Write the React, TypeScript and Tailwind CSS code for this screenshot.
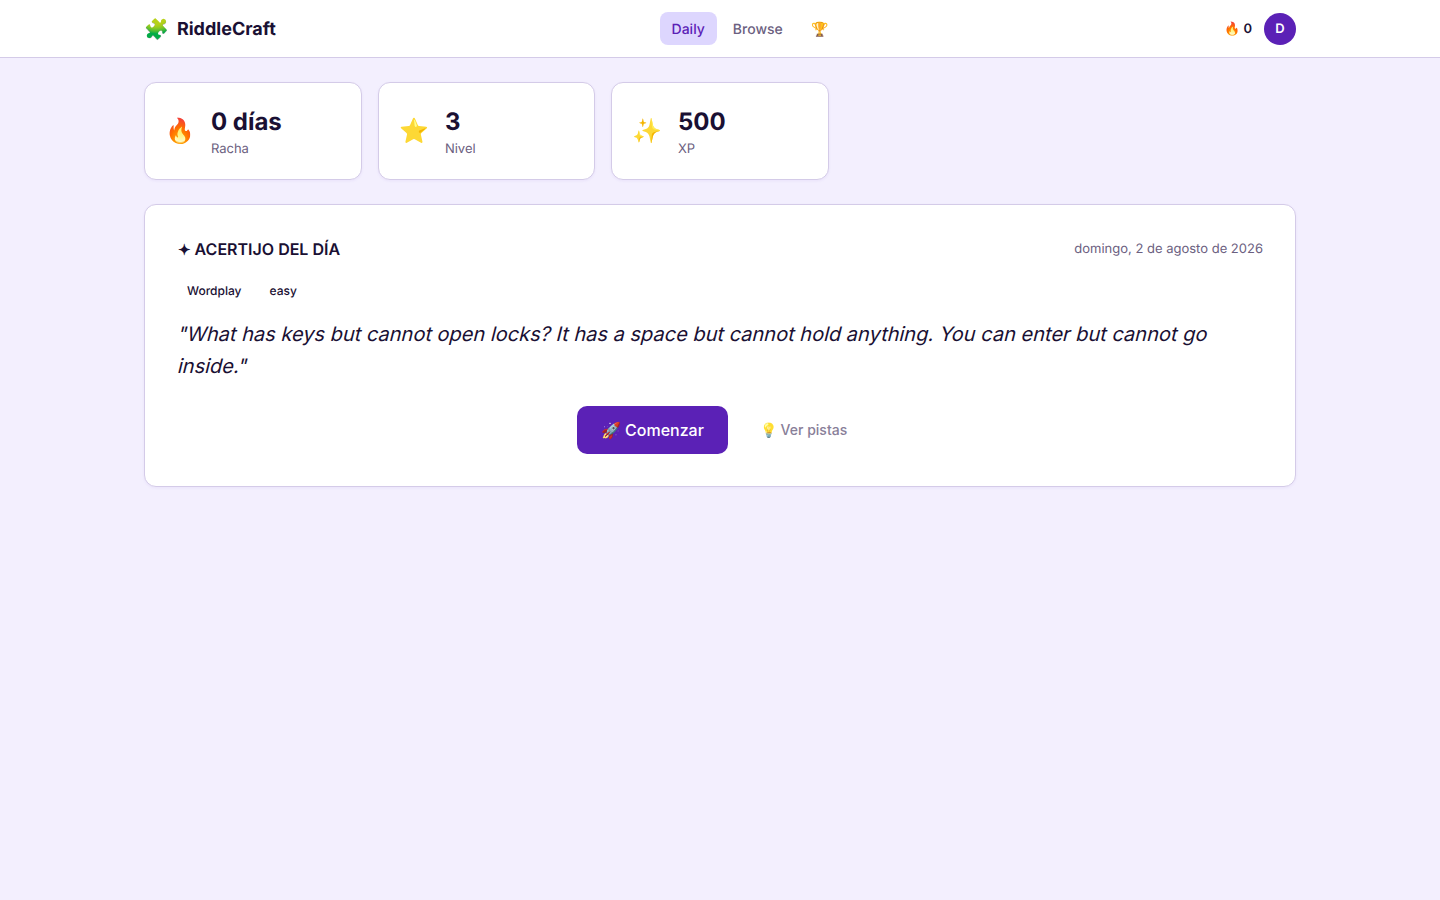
const stats = [
  { icon: "🔥", value: "0 días", label: "Racha" },
  { icon: "⭐", value: "3", label: "Nivel" },
  { icon: "✨", value: "500", label: "XP" },
];

export default function App() {
  return (
    <div className="min-h-screen bg-[#f3effe] font-['Inter',sans-serif] text-[#1a1033] antialiased [text-rendering:geometricPrecision]">
      <header className="h-[58px] bg-white border-b border-[#d4cbe8]">
        <div className="max-w-[1152px] mx-auto h-full flex items-center justify-between">
          <div className="flex items-center gap-2">
            <span className="text-xl leading-8">🧩</span>
            <span className="text-lg font-bold mt-[2px]">RiddleCraft</span>
          </div>
          <nav className="flex items-center gap-1">
            <a className="pl-3 pr-3 pt-[9px] pb-[7px] rounded-lg bg-[#ddd6fe] text-[#5b21b6] text-sm font-medium leading-[17px]">Daily</a>
            <a className="pl-3 pr-3 pt-[9px] pb-[7px] rounded-lg text-[#6b6080] text-sm font-medium leading-[17px]">Browse</a>
            <a className="pl-[13px] pr-[11px] pt-[9px] pb-[7px] rounded-lg text-[#6b6080] text-sm font-medium leading-[17px]">🏆</a>
          </nav>
          <div className="flex items-center gap-3">
            <span className="text-[13px] font-semibold mt-[2px]">🔥 0</span>
            <div className="w-8 h-8 pt-[2px] rounded-full bg-[#5b21b6] text-white text-[13px] font-semibold flex items-center justify-center">D</div>
          </div>
        </div>
      </header>
      <main className="max-w-[1152px] mx-auto pt-6 flex flex-col gap-6">
        <div className="grid grid-cols-[218px_217px_218px] gap-4">
          {stats.map((s) => (
            <div key={s.label} className="h-[98px] bg-white border border-[#d4cbe8] rounded-xl shadow-[0_1px_3px_rgba(91,33,182,0.06)] px-5 flex items-center gap-4">
              <span className="text-2xl leading-none">{s.icon}</span>
              <div>
                <div className="text-2xl font-bold leading-[36px]">{s.value}</div>
                <div className="text-[13px] text-[#6b6080] leading-5 -mt-px">{s.label}</div>
              </div>
            </div>
          ))}
        </div>
        <section className="bg-white border border-[#d4cbe8] rounded-xl shadow-[0_1px_3px_rgba(91,33,182,0.06)] p-8">
          <div className="flex items-center justify-between h-6">
            <h2 className="text-base font-semibold">
              <span className="text-[15px] ml-px">✦</span> ACERTIJO DEL DÍA
            </h2>
            <span className="text-[13px] text-[#6b6080] mt-[2px]">domingo, 2 de agosto de 2026</span>
          </div>
          <div className="flex gap-2 mt-[18px] text-xs font-medium">
            <span className="px-[10px] py-[3px] leading-[18px]">Wordplay</span>
            <span className="px-[10px] py-[3px] leading-[18px]">easy</span>
          </div>
          {/* the installed Inter italic has a different a, so slant the upright instead */}
          <p className="mt-[15px] text-xl leading-8">
            <span className="block -skew-x-[14deg] origin-[0_22px]">
              "What has keys but cannot open locks? It has a space but cannot hold anything. You can enter but cannot go
            </span>
            <span className="block -skew-x-[14deg] origin-[0_22px]">inside."</span>
          </p>
          <div className="mt-6 flex items-center justify-center gap-4">
            <button className="h-12 px-6 rounded-[10px] bg-[#5b21b6] text-white text-base font-medium">🚀 Comenzar</button>
            <button className="h-12 px-4 text-sm font-medium text-[#6b6080] opacity-80">💡 Ver pistas</button>
          </div>
        </section>
      </main>
    </div>
  );
}
